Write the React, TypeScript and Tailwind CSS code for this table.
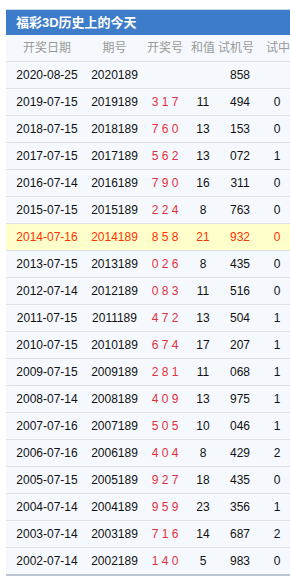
const rows = [
  { date: "2020-08-25", issue: "2020189", kj: "", hz: "", sj: "858", sz: "" },
  { date: "2019-07-15", issue: "2019189", kj: "3 1 7", hz: "11", sj: "494", sz: "0" },
  { date: "2018-07-15", issue: "2018189", kj: "7 6 0", hz: "13", sj: "153", sz: "0" },
  { date: "2017-07-15", issue: "2017189", kj: "5 6 2", hz: "13", sj: "072", sz: "1" },
  { date: "2016-07-14", issue: "2016189", kj: "7 9 0", hz: "16", sj: "311", sz: "0" },
  { date: "2015-07-15", issue: "2015189", kj: "2 2 4", hz: "8", sj: "763", sz: "0" },
  { date: "2014-07-16", issue: "2014189", kj: "8 5 8", hz: "21", sj: "932", sz: "0", hot: true },
  { date: "2013-07-15", issue: "2013189", kj: "0 2 6", hz: "8", sj: "435", sz: "0" },
  { date: "2012-07-14", issue: "2012189", kj: "0 8 3", hz: "11", sj: "516", sz: "0" },
  { date: "2011-07-15", issue: "2011189", kj: "4 7 2", hz: "13", sj: "504", sz: "1" },
  { date: "2010-07-15", issue: "2010189", kj: "6 7 4", hz: "17", sj: "207", sz: "1" },
  { date: "2009-07-15", issue: "2009189", kj: "2 8 1", hz: "11", sj: "068", sz: "1" },
  { date: "2008-07-14", issue: "2008189", kj: "4 0 9", hz: "13", sj: "975", sz: "1" },
  { date: "2007-07-16", issue: "2007189", kj: "5 0 5", hz: "10", sj: "046", sz: "1" },
  { date: "2006-07-16", issue: "2006189", kj: "4 0 4", hz: "8", sj: "429", sz: "2" },
  { date: "2005-07-15", issue: "2005189", kj: "9 2 7", hz: "18", sj: "435", sz: "0" },
  { date: "2004-07-14", issue: "2004189", kj: "9 5 9", hz: "23", sj: "356", sz: "1" },
  { date: "2003-07-14", issue: "2003189", kj: "7 1 6", hz: "14", sj: "687", sz: "2" },
  { date: "2002-07-14", issue: "2002189", kj: "1 4 0", hz: "5", sj: "983", sz: "0" },
];

const cols = "grid grid-cols-[82px_53px_48px_28px_46px_40px] text-center";

export default function App() {
  return (
    <div
      className="w-[290px] h-[577px] overflow-hidden bg-white pl-[6px] pt-[9px]"
      style={{ fontFamily: '"Liberation Sans", Arial, "Noto Sans CJK SC", sans-serif' }}
    >
      <div className="w-[300px]">
        <div className="h-[26px] bg-[#3d7cc9] border-t border-[#c9d6e6] pl-[10px] flex items-center text-[13px] font-bold text-white">
          福彩3D历史上的今天
        </div>
        <div className={`${cols} h-[27px] items-center bg-[#f5f9fd] border-b border-[#dde2e8] text-[12px] text-[#999]`}>
          <div>开奖日期</div>
          <div>期号</div>
          <div>开奖号</div>
          <div>和值</div>
          <div className="pr-[8px]">试机号</div>
          <div className="pr-[10px]">试中</div>
        </div>
        {rows.map((r, i) => (
          <div
            key={r.date}
            className={`${cols} h-[27px] items-center text-[12px] border-b ${
              i === rows.length - 1 ? "border-b-2 border-[#b9c5d2] h-[28px]" : "border-[#dde2e8]"
            } ${r.hot ? "bg-[#ffffcc] text-[#ff3300]" : "bg-[#f5f9fe] text-[#111]"}`}
          >
            <div>{r.date}</div>
            <div>{r.issue}</div>
            <div className={`${r.hot ? "" : "text-[#e0303a]"} whitespace-pre`}>{r.kj}</div>
            <div>{r.hz}</div>
            <div>{r.sj}</div>
            <div className="pr-[12px]">{r.sz}</div>
          </div>
        ))}
      </div>
    </div>
  );
}
